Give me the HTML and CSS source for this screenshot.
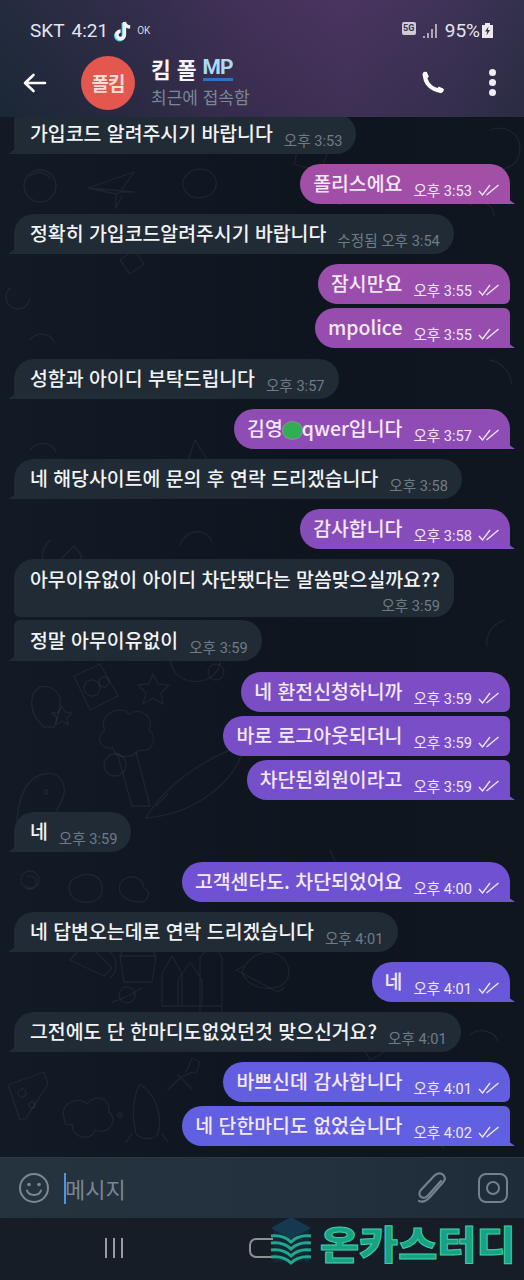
FILE: index.html
```html
<!DOCTYPE html>
<html lang="ko">
<head>
    <meta charset="UTF-8">
    <meta name="viewport" content="width=device-width, initial-scale=1.0">
    <title>킴 폴</title>
    <link rel="stylesheet" href="styles.css">
</head>
<body>

<div class="phone">

    <!-- Status bar + app bar -->
    <div class="top">
        <div class="status">
            <span class="carrier">SKT</span>
            <span class="clock">4:21</span>
            <svg class="tiktok" viewBox="0 0 20 24" width="19" height="23">
                <path d="M11 3v13.5a4 4 0 1 1-4-4" fill="none" stroke="#4fd8e0" stroke-width="4" transform="translate(-1 1)"/>
                <path d="M11 3v13.5a4 4 0 1 1-4-4M11 3c.4 3 2.600 5 6 5.300" fill="none" stroke="#f4f4f8" stroke-width="3.600"/>
            </svg>
            <span class="ok">OK</span>
            <span class="status-right">
                <span class="fiveg">5G</span>
                <svg class="signal" viewBox="0 0 15 16" width="15" height="16">
                    <path d="M1 13v2M5 10v5M9 6v9M13 1v14" stroke="#c9c5d3" stroke-width="1.600" fill="none"/>
                </svg>
                <span class="battery-text">95%</span>
                <svg class="battery" viewBox="0 0 11 15" width="11" height="15">
                    <path d="M3 0h5v2h3v13H0V2h3z" fill="#ece9f0"/>
                    <path d="M6.500 3.500 3 8.500h2.200L4.500 12.500 8 7H5.800z" fill="#3a3050"/>
                </svg>
            </span>
        </div>
        <div class="appbar">
            <svg class="back" viewBox="0 0 24 20" width="24" height="20">
                <path d="M22 10H2M10.500 2 2 10l8.500 8" fill="none" stroke="#fff" stroke-width="2.600" stroke-linecap="round" stroke-linejoin="round"/>
            </svg>
            <div class="avatar">폴킴</div>
            <div class="peer">
                <div class="peer-name">킴 폴<span class="mp">MP</span></div>
                <div class="peer-seen">최근에 접속함</div>
            </div>
            <svg class="call" viewBox="0 0 24 24" width="26" height="26">
                <path d="M5.500 3.500C5 11.500 11.500 19 20.500 19" fill="none" stroke="#fff" stroke-width="3.800" stroke-linecap="round"/>
                <path d="M3.800 5.200c-.3-1.400.5-2.700 1.800-2.900l1.200-.1 1.700 3.800-2 1.800zM18.600 20.200c1.700.5 3 .2 3.500-1l.2-1.400-3.800-1.900-1.900 2z" fill="#fff" stroke="#fff" stroke-width="1" stroke-linejoin="round"/>
            </svg>
            <div class="more"><i></i><i></i><i></i></div>
        </div>
    </div>

    <!-- Chat -->
    <div class="chat">
        <svg class="doodles" viewBox="0 117 524 1040" width="524" height="1040">
            <g fill="none" stroke="#fff" stroke-opacity=".06" stroke-width="1.300" stroke-linejoin="round" stroke-linecap="round">
                <!-- paper plane -->
                <path d="M88 188l46-16-14 20 14 0zM88 188l28 6 4-2M116 194l0 14 6-12"/>
                <circle cx="40" cy="186" r="16"/><path d="M30 176c6-5 14-5 20 2"/>
                <path d="M190 172c14-8 28 2 26 14s-22 16-30 6 0-16 4-20z"/>
                <path d="M10 288a12 12 0 1 0 20 10M60 560l14-14 8 10-10 14z"/>
                <!-- camera, star, cup -->
                <path d="M74 676l26-12 18 32-28 14z"/><circle cx="92" cy="688" r="8"/><circle cx="104" cy="682" r="5"/>
                <path d="M153 674l5 10 11 1-8 8 2 11-10-6-10 6 3-11-8-8 11-1z"/>
                <path d="M60 697c-8-15-26-14-28 2s8 24 12 28h10c2-8 8-16 6-30z"/>
                <path d="M62 706l3 6 7 1-5 5 1 7-6-4-6 4 1-7-5-5 7-1z"/>
                <!-- cloud tree, dino -->
                <path d="M105 730c-8-16 16-26 24-16 12-8 26 4 20 16 10 8 2 24-10 20-8 10-24 8-26-2-14 2-18-12-8-18z"/>
                <path d="M118 756l14 50h18l-14-54"/><circle cx="115" cy="765" r="11"/>
                <path d="M18 840c-4-30 4-62 26-66 18-4 24 14 18 26-4 10-10 14-8 26 8-8 16-8 20 0s-6 18-16 18"/>
                <circle cx="46" cy="792" r="2"/>
                <!-- surfboard -->
                <path d="M146 818c20-36 70-66 98-72-6 32-46 68-98 72zM156 806l12-12"/>
                <path d="M180 640c-14 10-12 30 2 38s34 2 38-14-6-30-20-30"/>
                <circle cx="216" cy="672" r="8"/>
                <!-- castle, planet, ufo -->
                <path d="M162 1006v-32l10-18 10 18v32M178 1006v-26l12-18 12 18v26M200 1014v-56l12-16 10 16v56M162 1006h60"/>
                <circle cx="127" cy="995" r="8"/><path d="M112 1002c10-2 20-8 30-14"/>
                <path d="M242 972c8-22 34-26 44-10 6 10 2 20-6 24-14 6-34 0-38-14z"/><path d="M244 966l-8 4 42 22 6-4"/>
                <path d="M70 960l16-18 26 26-8 8zM110 952c8 6 8 20 0 26"/>
                <!-- shells, cupcake -->
                <path d="M120 956h36l-4 26h-28zM120 956c4-14 30-14 36 0"/>
                <path d="M72 880c14-10 28-6 30 6s-8 18-20 16-16-14-10-22z"/>
                <path d="M120 884c8-12 22-8 24 4 8 4 4 14-4 14s-24-4-20-18z"/>
                <circle cx="30" cy="880" r="9"/><path d="M27 877a6 6 0 1 1-2 8"/>
                <!-- pizza, rocket, gingerbread -->
                <path d="M8 1085l36-13 4 12-22 34-6 2z"/><circle cx="22" cy="1093" r="4"/><circle cx="32" cy="1105" r="3"/>
                <path d="M65 1120c-8-14 12-26 22-16 6-10 24-8 22 8 10 8 0 24-14 18-2 12-26 8-22-6-8 2-10-2-8-4z"/>
                <path d="M140 1084c-8 14-8 34-4 50 6 6 18 6 22 0 4-16 0-38-18-50zM132 1134l-6 8M162 1134l6 8"/>
                <path d="M168 1090c8-8 14-16 26-18M178 1075l14 14M186 1072l6-14 8 4-4 12"/>
                <circle cx="120" cy="1115" r="2"/>
                <circle cx="340" cy="190" r="14"/><path d="M300 140l28 12-8 20-26-8z"/>
                <path d="M490 130c16-6 30 4 30 18s-10 24-26 20M470 205c12-6 24 0 24 10"/>
                <path d="M295 700c14-14 36-10 40 6M330 850l12 26M360 1042l18-10 10 18-18 10z"/>
                <path d="M420 1130l24 18M300 1140c8-14 24-14 32 0M470 1035c10-8 24-4 28 6M505 620c-12 4-20 14-18 26"/>
                <path d="M180 545c8-18 26-16 32-4M50 540c-10 10-10 24 0 32M195 440l16 26-26 4zM30 450c8-10 22-8 26 2"/>
                <path d="M490 360c10 2 20 10 22 24M120 260l14-10 10 14-14 10zM30 340c6-8 20-8 24 2"/>
            </g>
        </svg>

        <div class="messages">
            <div class="msg in first"><span class="text">가입코드 알려주시기 바랍니다</span><span class="meta">오후 3:53</span></div>

            <div class="msg out tail">
                <span class="text">폴리스에요</span><span class="meta">오후 3:53<svg class="ticks" viewBox="0 0 22 12" width="22" height="12"><path d="M1 7l3.500 4L12 1M8.500 11 20.500 1" fill="none" stroke="currentColor" stroke-width="1.300"/></svg></span>
            </div>

            <div class="msg in"><span class="text">정확히 가입코드알려주시기 바랍니다</span><span class="meta">수정됨 오후 3:54</span></div>

            <div class="msg out head">
                <span class="text">잠시만요</span><span class="meta">오후 3:55<svg class="ticks" viewBox="0 0 22 12" width="22" height="12"><path d="M1 7l3.500 4L12 1M8.500 11 20.500 1" fill="none" stroke="currentColor" stroke-width="1.300"/></svg></span>
            </div>
            <div class="msg out same tail">
                <span class="text">mpolice</span><span class="meta">오후 3:55<svg class="ticks" viewBox="0 0 22 12" width="22" height="12"><path d="M1 7l3.500 4L12 1M8.500 11 20.500 1" fill="none" stroke="currentColor" stroke-width="1.300"/></svg></span>
            </div>

            <div class="msg in gap11"><span class="text">성함과 아이디 부탁드립니다</span><span class="meta">오후 3:57</span></div>

            <div class="msg out tail">
                <span class="text">김영<span class="blot"></span>qwer입니다</span><span class="meta">오후 3:57<svg class="ticks" viewBox="0 0 22 12" width="22" height="12"><path d="M1 7l3.500 4L12 1M8.500 11 20.500 1" fill="none" stroke="currentColor" stroke-width="1.300"/></svg></span>
            </div>

            <div class="msg in"><span class="text">네 해당사이트에 문의 후 연락 드리겠습니다</span><span class="meta">오후 3:58</span></div>

            <div class="msg out tail">
                <span class="text">감사합니다</span><span class="meta">오후 3:58<svg class="ticks" viewBox="0 0 22 12" width="22" height="12"><path d="M1 7l3.500 4L12 1M8.500 11 20.500 1" fill="none" stroke="currentColor" stroke-width="1.300"/></svg></span>
            </div>

            <div class="msg in tall"><span class="text">아무이유없이 아이디 차단됐다는 말씀맞으실까요??</span><span class="meta">오후 3:59</span></div>
            <div class="msg in same-in"><span class="text">정말 아무이유없이</span><span class="meta">오후 3:59</span></div>

            <div class="msg out head gap11">
                <span class="text">네 환전신청하니까</span><span class="meta">오후 3:59<svg class="ticks" viewBox="0 0 22 12" width="22" height="12"><path d="M1 7l3.500 4L12 1M8.500 11 20.500 1" fill="none" stroke="currentColor" stroke-width="1.300"/></svg></span>
            </div>
            <div class="msg out same mid">
                <span class="text">바로 로그아웃되더니</span><span class="meta">오후 3:59<svg class="ticks" viewBox="0 0 22 12" width="22" height="12"><path d="M1 7l3.500 4L12 1M8.500 11 20.500 1" fill="none" stroke="currentColor" stroke-width="1.300"/></svg></span>
            </div>
            <div class="msg out same tail">
                <span class="text">차단된회원이라고</span><span class="meta">오후 3:59<svg class="ticks" viewBox="0 0 22 12" width="22" height="12"><path d="M1 7l3.500 4L12 1M8.500 11 20.500 1" fill="none" stroke="currentColor" stroke-width="1.300"/></svg></span>
            </div>

            <div class="msg in gap12"><span class="text">네</span><span class="meta">오후 3:59</span></div>

            <div class="msg out tail">
                <span class="text">고객센타도. 차단되었어요</span><span class="meta">오후 4:00<svg class="ticks" viewBox="0 0 22 12" width="22" height="12"><path d="M1 7l3.500 4L12 1M8.500 11 20.500 1" fill="none" stroke="currentColor" stroke-width="1.300"/></svg></span>
            </div>

            <div class="msg in"><span class="text">네 답변오는데로 연락 드리겠습니다</span><span class="meta">오후 4:01</span></div>

            <div class="msg out tail">
                <span class="text">네</span><span class="meta">오후 4:01<svg class="ticks" viewBox="0 0 22 12" width="22" height="12"><path d="M1 7l3.500 4L12 1M8.500 11 20.500 1" fill="none" stroke="currentColor" stroke-width="1.300"/></svg></span>
            </div>

            <div class="msg in"><span class="text">그전에도 단 한마디도없었던것 맞으신거요?</span><span class="meta">오후 4:01</span></div>

            <div class="msg out head">
                <span class="text">바쁘신데 감사합니다</span><span class="meta">오후 4:01<svg class="ticks" viewBox="0 0 22 12" width="22" height="12"><path d="M1 7l3.500 4L12 1M8.500 11 20.500 1" fill="none" stroke="currentColor" stroke-width="1.300"/></svg></span>
            </div>
            <div class="msg out same tail">
                <span class="text">네 단한마디도 없었습니다</span><span class="meta">오후 4:02<svg class="ticks" viewBox="0 0 22 12" width="22" height="12"><path d="M1 7l3.500 4L12 1M8.500 11 20.500 1" fill="none" stroke="currentColor" stroke-width="1.300"/></svg></span>
            </div>
        </div>
    </div>

    <!-- Message input -->
    <div class="composer">
        <svg class="smile" viewBox="0 0 32 32" width="32" height="32">
            <circle cx="16" cy="16" r="14" fill="none" stroke="#7d8892" stroke-width="2"/>
            <circle cx="11" cy="12.500" r="1.800" fill="#7d8892"/>
            <circle cx="21" cy="12.500" r="1.800" fill="#7d8892"/>
            <path d="M9 18.500c2 6 12 6 14 0" fill="none" stroke="#7d8892" stroke-width="2" stroke-linecap="round"/>
        </svg>
        <span class="cursor"></span>
        <span class="placeholder">메시지</span>
        <svg class="clip" viewBox="0 0 30 32" width="30" height="32">
            <path d="M25 9 11.500 24c-2 2.200-5 2.300-6.800.6s-1.600-4.600.4-6.800L18.500 3.500c3-3 6.800-2.600 8.800-.5s2 5-.6 7.800L14 25c-4 4.300-8 5.500-11 4" fill="none" stroke="#74808b" stroke-width="2.200" stroke-linecap="round"/>
        </svg>
        <svg class="camera" viewBox="0 0 30 30" width="30" height="30">
            <rect x="1" y="1" width="28" height="28" rx="7" fill="none" stroke="#74808b" stroke-width="2"/>
            <circle cx="15" cy="15" r="6" fill="none" stroke="#74808b" stroke-width="2"/>
        </svg>
    </div>

    <!-- Navigation bar with site watermark on top -->
    <div class="navbar">
        <div class="nav-recent"><i></i><i></i><i></i></div>
        <div class="nav-home"></div>
        <div class="watermark">
            <svg class="wm-logo" viewBox="0 0 52 52" width="52" height="52">
                <path d="M8 12v34h36V12L26 23z" fill="#12283a"/>
                <path d="M26 1 46 12 26 23 6 12z" fill="#153a50"/>
                <g fill="none" stroke="#22a98a" stroke-width="3">
                    <path d="M6 20c8-1 15 1 20 6 5-5 12-7 20-6"/>
                    <path d="M6 27c8-1 15 1 20 6 5-5 12-7 20-6"/>
                    <path d="M6 34c8-1 15 1 20 6 5-5 12-7 20-6"/>
                    <path d="M6 41c8-1 15 1 20 6 5-5 12-7 20-6"/>
                </g>
            </svg>
            <span class="wm-text">온카스터디</span>
        </div>
    </div>

</div>

</body>
</html>
```

FILE: styles.css
```css
* {
    box-sizing: border-box;
}
body {
    margin: 0;
    background: #10161f;
    font-family: Roboto, "Noto Sans CJK KR", sans-serif;
    color: #fff;
}
.phone {
    width: 524px;
    height: 1280px;
    display: flex;
    flex-direction: column;
    overflow: hidden;
}

/* top */
.top {
    height: 117px;
    flex: none;
    position: relative;
    z-index: 2;
    background:
        linear-gradient(180deg, rgba(70, 50, 95, .18), rgba(20, 30, 45, .22)),
        linear-gradient(90deg, #1d2a38 0%, #2c2c45 22%, #433158 48%, #4a3560 66%, #3e3356 86%, #2f3048 100%);
}
.status {
    height: 52px;
    padding: 9px 31px 0 30px;
    display: flex;
    align-items: center;
    font-size: 19px;
    color: #e6e4ec;
}
.carrier {
    margin-right: 7px;
}
.clock {
    margin-right: 6px;
}
.ok {
    font-size: 10px;
    margin-left: 4px;
    margin-top: -1px;
    color: #d8d6e0;
}
.status-right {
    margin-left: auto;
    display: flex;
    align-items: center;
}
.fiveg {
    width: 14px;
    height: 13px;
    margin-top: -5px;
    margin-right: 7px;
    font-size: 9px;
    font-weight: 700;
    line-height: 13px;
    text-align: center;
    background: #cfccd8;
    color: #3a3050;
    border-radius: 2px;
}
.signal {
    margin-right: 7px;
}
.battery-text {
    font-size: 19px;
    margin-right: 2px;
}
.appbar {
    height: 65px;
    display: flex;
    align-items: center;
    padding-left: 23px;
    margin-top: -2px;
}
.back {
    margin-right: 34px;
}
.avatar {
    width: 54px;
    height: 54px;
    flex: none;
    border-radius: 50%;
    background: #e4574f;
    color: #f9dcd6;
    font-family: "Noto Sans CJK KR", sans-serif;
    font-weight: 700;
    font-size: 19px;
    letter-spacing: -1px;
    text-align: center;
    line-height: 54px;
    margin-right: 16px;
}
.peer {
    flex: 1;
    margin-top: -3px;
    font-family: "Noto Sans CJK KR", sans-serif;
}
.peer-name {
    font-size: 21.500px;
    font-weight: 700;
    height: 31px;
    line-height: 31px;
    color: #f4f4f6;
    display: flex;
    align-items: center;
}
.mp {
    margin-left: 6px;
    font-family: Roboto, sans-serif;
    font-size: 21px;
    font-weight: 700;
    letter-spacing: -1px;
    color: #a8dcf5;
    border-bottom: 3px solid #2a74c8;
    line-height: 21px;
}
.peer-seen {
    font-size: 17px;
    height: 25px;
    line-height: 25px;
    color: #7c8695;
}
.call {
    margin-right: 44px;
}
.more {
    width: 8px;
    margin-right: 27px;
    display: flex;
    flex-direction: column;
    gap: 3px;
}
.more i {
    display: block;
    width: 7px;
    height: 7px;
    border-radius: 50%;
    background: #eeecf2;
}

/* chat */
.chat {
    flex: 1;
    position: relative;
    overflow: hidden;
    background: linear-gradient(90deg, #121a25, #0f151f 60%, #10161f);
}
.doodles {
    position: absolute;
    top: 0;
    left: 0;
}
.messages {
    position: relative;
    display: flex;
    flex-direction: column;
    align-items: flex-start;
    padding: 0 14px;
}
.msg {
    position: relative;
    min-height: 40px;
    margin-top: 10px;
    padding: 0 14px 0 16px;
    display: flex;
    align-items: center;
    border-radius: 20px;
    white-space: nowrap;
}
.text {
    font-family: "Noto Sans CJK KR", sans-serif;
    font-size: 19.400px;
    font-weight: 500;
    line-height: 36px;
    margin-top: -2px;
    color: #f2f3f5;
}
.meta {
    display: flex;
    align-items: center;
    margin-left: 11px;
    margin-top: 11px;
    font-family: Roboto, "Noto Sans CJK KR", sans-serif;
    font-size: 14.600px;
}
.ticks {
    margin-left: 6px;
    margin-right: -4px;
}
.in {
    background: #212b35;
    border-bottom-left-radius: 4px;
}
.in .meta {
    color: #6f7c88;
}
.in::after,
.tail::after {
    content: "";
    position: absolute;
    bottom: 0;
    width: 12px;
    height: 14px;
}
.in::after {
    left: -6px;
    background: #212b35;
    clip-path: polygon(100% 0, 100% 100%, 0 100%, 50% 70%);
}
.out {
    align-self: flex-end;
    padding-left: 13px;
    background: linear-gradient(180deg, #a44fa5 0%, #a44fa5 12%, #8f4cb4 33%, #7b4dc5 55%, #6e52d3 70%, #6160e2 88%) fixed;
}
.out .text {
    color: #f4e9f8;
}
.out .meta {
    color: #efe8f8;
}
.tail {
    border-bottom-right-radius: 4px;
}
.tail::after {
    right: -5px;
    background: linear-gradient(180deg, #a44fa5 0%, #a44fa5 12%, #8f4cb4 33%, #7b4dc5 55%, #6e52d3 70%, #6160e2 88%) fixed;
    clip-path: polygon(0 0, 0 100%, 100% 100%, 50% 70%);
}
.head,
.mid {
    border-bottom-right-radius: 6px;
}
.same {
    margin-top: 4px;
    border-top-right-radius: 6px;
}
.first {
    margin-top: -3px;
    border-top-left-radius: 6px;
}
.tall {
    height: 58px;
    flex-wrap: wrap;
    width: 440px;
    align-content: flex-start;
    border-bottom-left-radius: 6px;
}
.tall .text {
    margin-top: 2px;
}
.tall .meta {
    margin: -3px 0 0 auto;
}
.tall::after {
    display: none;
}
.same-in {
    margin-top: 3px;
    min-height: 41px;
    border-top-left-radius: 6px;
}
.gap11 {
    margin-top: 11px;
}
.gap12 {
    margin-top: 12px;
}
.blot {
    display: inline-block;
    width: 21px;
    height: 19px;
    margin: 0 -1px;
    vertical-align: -4px;
    border-radius: 50%;
    background: #2fae52;
    border: 1px solid #8d8f9c;
}

/* composer */
.composer {
    height: 61px;
    flex: none;
    display: flex;
    align-items: center;
    padding: 0 16px 0 18px;
    background: linear-gradient(90deg, #25333f, #23303d 60%, #1e2b38);
    border-top: 1px solid #2a3844;
}
.cursor {
    width: 2px;
    height: 31px;
    margin-left: 14px;
    background: #4d97d8;
}
.placeholder {
    font-family: "Noto Sans CJK KR", sans-serif;
    font-size: 22px;
    color: #79868f;
    margin-left: -1px;
    flex: 1;
}
.clip {
    margin-right: 32px;
}

/* nav */
.navbar {
    height: 62px;
    flex: none;
    position: relative;
    display: flex;
    align-items: center;
    background: #171d26;
    padding-left: 105px;
}
.nav-recent {
    display: flex;
    gap: 6px;
    margin-top: -3px;
}
.nav-recent i {
    display: block;
    width: 2px;
    height: 20px;
    background: #9a9ca1;
}
.nav-home {
    width: 24px;
    height: 20px;
    margin-left: 126px;
    margin-top: -3px;
    border: 2px solid #8e9094;
    border-right: 0;
    border-radius: 7px 0 0 7px;
}
.watermark {
    position: absolute;
    left: 265px;
    top: -2px;
    display: flex;
    align-items: center;
}
.wm-text {
    font-family: "Noto Sans CJK KR", sans-serif;
    font-weight: 900;
    font-size: 39px;
    line-height: 50px;
    margin-left: 3px;
    color: #18a183;
    -webkit-text-stroke: 1px #3bd0aa;
    transform: scaleX(1.09);
    transform-origin: left center;
}
```
